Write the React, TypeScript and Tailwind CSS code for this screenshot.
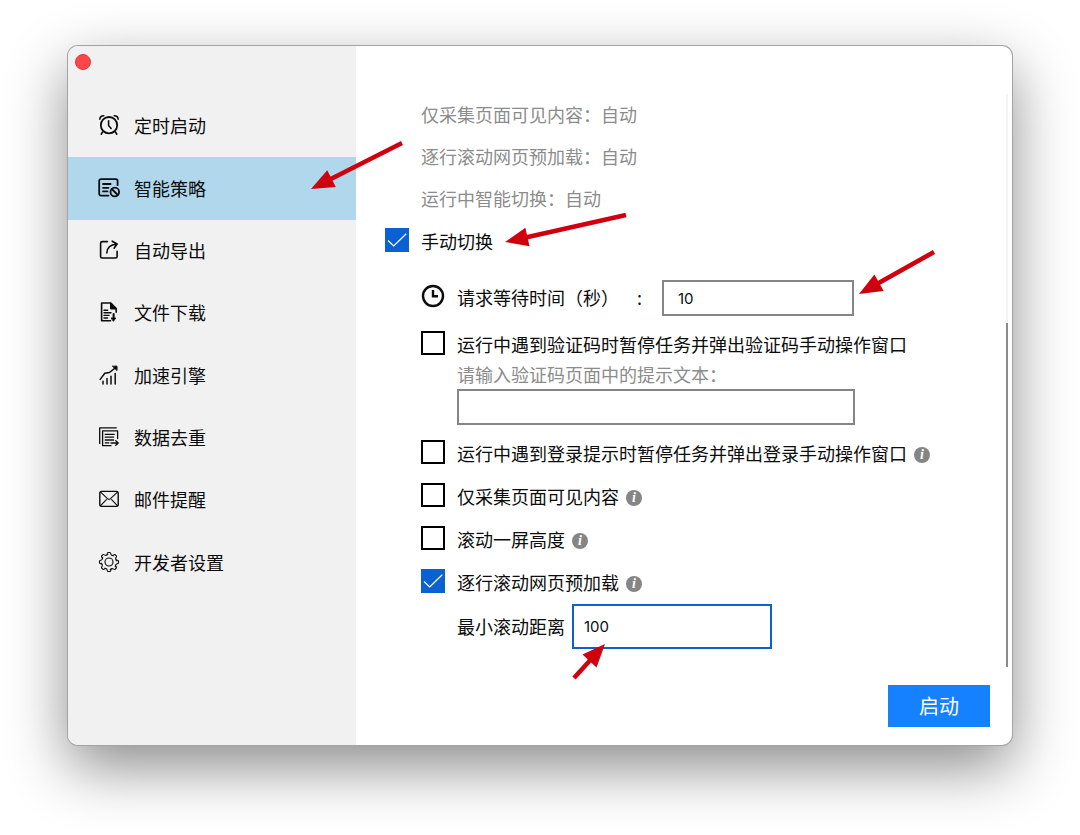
import { type ReactNode } from 'react';
import { clsx } from 'clsx';

type IconProps = { children: ReactNode };
const Icon = ({ children }: IconProps) => (
  <svg
    viewBox="0 0 22 22"
    className="size-[22px]"
    fill="none"
    stroke="currentColor"
    strokeWidth="1.6"
    strokeLinecap="round"
    strokeLinejoin="round"
    aria-hidden="true"
  >
    {children}
  </svg>
);

const AlarmIcon = () => (
  <Icon>
    <circle cx="11" cy="11.2" r="8.2" strokeWidth="1.8" />
    <path d="M10.6 6.8v4.7l2.5 2.9M1.8 5.2C2 3.2 3.6 1.8 5.8 1.8M20.2 5.2C20 3.2 18.4 1.8 16.2 1.8M4.6 18l-1.4 2.2M17.4 18l1.4 2.2" />
  </Icon>
);

const StrategyIcon = () => (
  <Icon>
    <g strokeWidth="1.8">
      <path d="M10.5 18.6H3a1.8 1.8 0 0 1-1.8-1.8V4A1.8 1.8 0 0 1 3 2.2h14.8A1.8 1.8 0 0 1 19.6 4v4.2" />
      <path d="M5 7h7.6M5 10.8h5.4M5 14.4h4.5" />
      <circle cx="16.8" cy="15" r="4.3" />
      <path d="m13.8 12 6 6" />
    </g>
  </Icon>
);

const ExportIcon = () => (
  <Icon>
    <path d="M9.4 2.6H4.2a1.6 1.6 0 0 0-1.6 1.6v13.2A1.6 1.6 0 0 0 4.2 19h13.3a1.6 1.6 0 0 0 1.6-1.6v-5" />
    <path d="M8.8 14c.2-4.6 3-8.4 9.6-8.8M14.2 2.2l4.9 2.8-3 4.2" />
  </Icon>
);

const FileIcon = () => (
  <Icon>
    <path d="M12.5 19.8H3.6V2h8.6l6 6v3.2" />
    <path d="M12.8 2v5.6h5.4z" fill="currentColor" />
    <path d="M6 9.2h3.6M6 11.8h7M6 14.4h5M6 17h3.5" strokeWidth="1.4" />
    <path d="M15.6 13v4" strokeWidth="2" />
    <path d="M13.5 17h4.2l-2.1 3z" fill="currentColor" strokeWidth="1" />
  </Icon>
);

const ChartIcon = () => (
  <Icon>
    <path
      d="M5 17.2V20M9 14.4V20M13 12.2V20M17.2 9.6V20M2.2 15.4 6.8 9.3l4.6-.8 6.6-5.2"
      strokeWidth="1.5"
    />
    <path d="M14.8 2.2h4.2v4z" fill="currentColor" strokeWidth="1" />
  </Icon>
);

const DataIcon = () => (
  <Icon>
    <path
      d="M1.7 17.4V1.8h16.6M19.6 12.6V4.8H4.6v14.9H13M7.2 8.4h9M7.2 11.2h8.4M7.2 14h8.4M7.2 16.8h3.6"
      strokeWidth="1.3"
    />
    <path d="M13 17h7M17.8 14.8l2.4 2.2-2.4 2.2" strokeWidth="1.4" />
  </Icon>
);

const MailIcon = () => (
  <Icon>
    <rect x="1.8" y="3.4" width="18.4" height="15" rx="1.8" strokeWidth="1.4" />
    <path
      d="m2.6 4.2 6.9 6.4c1 .9 2 .9 3 0l6.9-6.4M2.6 17.6l5.8-6M19.4 17.6l-5.8-6"
      strokeWidth="1.1"
    />
  </Icon>
);

const gearAngles = [0, 45, 90, 135, 180, 225, 270, 315];

// one tooth and the notch after it, repeated around the centre
const GearIcon = () => (
  <Icon>
    <circle cx="11" cy="11" r="4" strokeWidth="1.1" />
    {gearAngles.map((angle) => (
      <path
        key={angle}
        d="M8.9 3.6C9.3 3 9.3 1.5 10 1.5h2c.7 0 .7 1.5 1.1 2.1.5.7 1.7 1.2 2.6 1.1"
        strokeWidth="1.1"
        transform={`rotate(${angle} 11 11)`}
      />
    ))}
  </Icon>
);

const ClockIcon = () => (
  <svg
    viewBox="0 0 24 24"
    className="size-6"
    fill="none"
    stroke="currentColor"
    strokeWidth="2.4"
    aria-hidden="true"
  >
    <circle cx="12" cy="12" r="10" />
    <path d="M12 6v6.2h5" />
  </svg>
);

// Red callout arrow. The tip is the origin, tailX / tailY is where the shaft starts.
type ArrowProps = { className: string; tailX: number; tailY: number };
const Arrow = ({ className, tailX, tailY }: ArrowProps) => {
  const length = Math.hypot(tailX, tailY);
  const angle = (Math.atan2(tailY, tailX) * 180) / Math.PI;

  return (
    <svg
      className={clsx(
        'pointer-events-none absolute size-px overflow-visible text-[#d0010f]',
        className
      )}
      aria-hidden="true"
    >
      <g transform={`rotate(${angle})`} fill="currentColor">
        <path d="M0 0 23-9.5v19z" />
        <path d={`M20-2.3H${length}v4.6H20z`} />
      </g>
    </svg>
  );
};

const InfoBadge = () => (
  <span
    title="说明"
    className="mt-1.5 ml-[7px] flex size-4 items-center justify-center rounded-full bg-[#858585] font-['Liberation_Serif',serif] text-sm leading-4 font-bold text-white italic"
  >
    i
  </span>
);

type CheckOptionProps = {
  id: string;
  label: string;
  checked?: boolean;
  hasInfo?: boolean;
  children?: ReactNode;
};
const CheckOption = ({
  id,
  label,
  checked,
  hasInfo,
  children,
}: CheckOptionProps) => (
  <div className="relative flex h-6 items-center">
    <span className="grid size-6 shrink-0">
      <input
        id={id}
        type="checkbox"
        defaultChecked={checked}
        className="peer col-start-1 row-start-1 size-6 appearance-none border-2 border-black bg-white checked:border-[#0b61d1] checked:bg-[#0b61d1]"
      />
      <svg
        viewBox="0 0 24 24"
        className="pointer-events-none col-start-1 row-start-1 size-6 opacity-0 peer-checked:opacity-100"
        fill="none"
        stroke="white"
        strokeWidth="1.2"
        aria-hidden="true"
      >
        <path d="m3 12.5 5.7 5.5L21.3 5.8" />
      </svg>
    </span>
    <label htmlFor={id} className="mt-0.5 ml-3 leading-6">
      {label}
    </label>
    {hasInfo && <InfoBadge />}
    {children}
  </div>
);

const navItems = [
  { label: '定时启动', icon: <AlarmIcon /> },
  { label: '智能策略', icon: <StrategyIcon />, active: true },
  { label: '自动导出', icon: <ExportIcon /> },
  { label: '文件下载', icon: <FileIcon /> },
  { label: '加速引擎', icon: <ChartIcon /> },
  { label: '数据去重', icon: <DataIcon /> },
  { label: '邮件提醒', icon: <MailIcon /> },
  { label: '开发者设置', icon: <GearIcon /> },
];

const Sidebar = () => (
  <aside className="z-10 w-72 shrink-0 rounded-l-[10px] bg-[#f1f1f1]">
    <div className="flex h-[49px] px-[7px] pt-2">
      <button
        type="button"
        aria-label="关闭"
        className="size-4 rounded-full border border-[#e0383c] bg-[#fe4649]"
      />
    </div>
    <nav className="grid h-[499px] grid-rows-8">
      {navItems.map(({ label, icon, active }) => (
        <a
          key={label}
          href="#"
          className={clsx(
            'relative flex items-center gap-3.5 pb-0.5 pl-[30px]',
            active && 'bg-[#b1d7ec]'
          )}
        >
          {icon}
          <span>{label}</span>
          {active && (
            <Arrow className="top-8 right-11" tailX={91} tailY={-46} />
          )}
        </a>
      ))}
    </nav>
  </aside>
);

const autoOptions = [
  '仅采集页面可见内容：自动',
  '逐行滚动网页预加载：自动',
  '运行中智能切换：自动',
];

const StrategyForm = () => (
  <form className="min-w-0 flex-1 pb-[18px] pl-[29px]">
    <ul className="pl-9 text-[#8c8c8c]">
      {autoOptions.map((option) => (
        <li key={option} className="h-[42px] leading-10">
          {option}
        </li>
      ))}
    </ul>
    <div className="mt-2 flex">
      <CheckOption id="manual" label="手动切换" checked>
        <Arrow className="top-3.5 left-[120px]" tailX={121} tailY={-27} />
      </CheckOption>
    </div>

    <div className="mt-7 pl-9">
      <div className="relative flex h-9 items-center">
        <span className="pb-1">
          <ClockIcon />
        </span>
        <label htmlFor="wait" className="ml-3 flex w-[205px] pb-0.5">
          <span className="w-[180px]">请求等待时间（秒）</span>:
        </label>
        <input
          id="wait"
          defaultValue="10"
          className="h-9 w-48 border-2 border-[#858585] bg-white px-3.5 font-['Inter',sans-serif] text-[15px] outline-none"
        />
        <Arrow className="top-3.5 left-[438px]" tailX={75} tailY={-42} />
      </div>

      <div className="mt-[15px]">
        <CheckOption
          id="captcha"
          label="运行中遇到验证码时暂停任务并弹出验证码手动操作窗口"
        />
      </div>
      <div className="mt-2 flex flex-col pl-9">
        <label
          htmlFor="captcha-text"
          className="leading-[22px] text-[#8c8c8c]"
        >
          请输入验证码页面中的提示文本：
        </label>
        <input
          id="captcha-text"
          className="mt-1 h-9 w-[398px] border-2 border-[#858585] bg-white px-3.5 font-['Inter',sans-serif] text-[15px] outline-none"
        />
      </div>

      <div className="mt-[15px] flex flex-col gap-[19px]">
        <CheckOption
          id="login"
          label="运行中遇到登录提示时暂停任务并弹出登录手动操作窗口"
          hasInfo
        />
        <CheckOption id="visible" label="仅采集页面可见内容" hasInfo />
        <CheckOption id="screen" label="滚动一屏高度" hasInfo />
        <CheckOption id="rows" label="逐行滚动网页预加载" checked hasInfo />
      </div>
      <div className="relative mt-[11px] flex items-center gap-[7px] pl-9">
        <label htmlFor="distance" className="pb-0.5">
          最小滚动距离
        </label>
        <input
          id="distance"
          defaultValue="100"
          className="h-[45px] w-[200px] border-2 border-[#0b61d1] bg-white px-2.5 font-['Inter',sans-serif] text-[15px] outline-none"
        />
        <Arrow className="top-10 left-[184px]" tailX={-31} tailY={34} />
      </div>
    </div>
  </form>
);

const App = () => (
  <div
    lang="zh-CN"
    className="bg-white px-[68px] pt-[46px] pb-[90px] font-['Noto_Sans_CJK_SC',sans-serif] text-lg leading-6 text-[#0c0c0c]"
  >
    <div className="flex rounded-[10px] bg-white shadow-[0_0_0_1px_#a3a3a3,0_22px_60px_rgba(0,0,0,0.46)]">
      <Sidebar />
      <main className="flex min-w-0 flex-1 flex-col pt-12">
        <div className="flex flex-1 pr-1">
          <StrategyForm />
          {/* scroll rail */}
          <div className="flex w-0.5 flex-col bg-[#f3f3f3]">
            <div className="mt-auto h-3/5 bg-[#8a8a8a]" />
          </div>
        </div>
        <div className="flex justify-end py-[18px] pr-[22px]">
          <button
            type="button"
            className="h-[42px] w-[102px] bg-[#1681ff] text-xl text-white"
          >
            启动
          </button>
        </div>
      </main>
    </div>
  </div>
);

export default App;
